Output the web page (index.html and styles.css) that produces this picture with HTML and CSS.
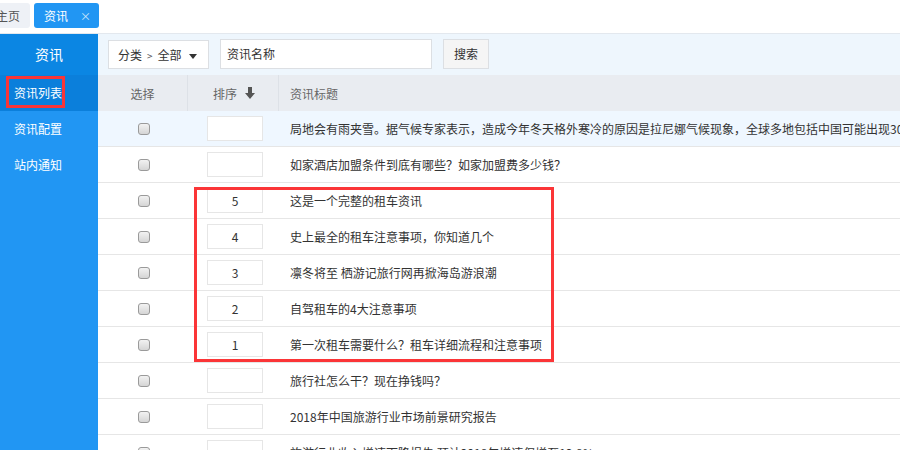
FILE: index.html
```html
<!DOCTYPE html>
<html lang="zh-CN">
<head>
    <meta charset="UTF-8">
    <title>资讯列表</title>
    <link rel="stylesheet" href="styles.css">
</head>
<body>
    <div class="tabs">
        <div class="tab">主页</div>
        <div class="tab active">资讯<span class="close">×</span></div>
    </div>
    <div class="layout">
        <div class="sidebar">
            <div class="side-title">资讯</div>
            <div class="side-item current">资讯列表<span class="mark mark-side"></span></div>
            <div class="side-item">资讯配置</div>
            <div class="side-item">站内通知</div>
        </div>
        <div class="main">
            <div class="toolbar">
                <div class="select">分类<span class="gt">&gt;</span>全部<span class="caret"></span></div>
                <div class="search-input">资讯名称</div>
                <div class="btn">搜索</div>
            </div>
            <div class="table">
                <div class="row head">
                    <div class="c-check">选择</div>
                    <div class="c-sort">排序
                        <svg class="arrow" width="10" height="12" viewBox="0 0 10 12"><path d="M3 0h4v6h3l-5 6-5-6h3z" fill="#555"/></svg>
                    </div>
                    <div class="c-title">资讯标题</div>
                </div>
                <div class="row hover">
                    <div class="c-check"><span class="box"></span></div>
                    <div class="c-sort"><span class="num"></span></div>
                    <div class="c-title">局地会有雨夹雪。据气候专家表示，造成今年冬天格外寒冷的原因是拉尼娜气候现象，全球多地包括中国可能出现30年来最冷冬天</div>
                </div>
                <div class="row">
                    <div class="c-check"><span class="box"></span></div>
                    <div class="c-sort"><span class="num"></span></div>
                    <div class="c-title">如家酒店加盟条件到底有哪些？如家加盟费多少钱？</div>
                </div>
                <div class="row">
                    <div class="c-check"><span class="box"></span></div>
                    <div class="c-sort"><span class="num">5</span></div>
                    <div class="c-title">这是一个完整的租车资讯</div>
                </div>
                <div class="row">
                    <div class="c-check"><span class="box"></span></div>
                    <div class="c-sort"><span class="num">4</span></div>
                    <div class="c-title">史上最全的租车注意事项，你知道几个</div>
                </div>
                <div class="row">
                    <div class="c-check"><span class="box"></span></div>
                    <div class="c-sort"><span class="num">3</span></div>
                    <div class="c-title">凛冬将至 栖游记旅行网再掀海岛游浪潮</div>
                </div>
                <div class="row">
                    <div class="c-check"><span class="box"></span></div>
                    <div class="c-sort"><span class="num">2</span></div>
                    <div class="c-title">自驾租车的4大注意事项</div>
                </div>
                <div class="row">
                    <div class="c-check"><span class="box"></span></div>
                    <div class="c-sort"><span class="num">1</span></div>
                    <div class="c-title">第一次租车需要什么？租车详细流程和注意事项</div>
                </div>
                <div class="row">
                    <div class="c-check"><span class="box"></span></div>
                    <div class="c-sort"><span class="num"></span></div>
                    <div class="c-title">旅行社怎么干？现在挣钱吗？</div>
                </div>
                <div class="row">
                    <div class="c-check"><span class="box"></span></div>
                    <div class="c-sort"><span class="num"></span></div>
                    <div class="c-title">2018年中国旅游行业市场前景研究报告</div>
                </div>
                <div class="row">
                    <div class="c-check"><span class="box"></span></div>
                    <div class="c-sort"><span class="num"></span></div>
                    <div class="c-title">旅游行业收入增速下降报告 预计2018年增速仅增至12.8%</div>
                </div>
                <span class="mark mark-rows"></span>
            </div>
        </div>
    </div>
</body>
</html>
```

FILE: styles.css
```css
body {
    margin: 0;
    width: 900px;
    height: 450px;
    overflow: hidden;
    font-family: "Noto Sans CJK SC", "Noto Sans", sans-serif;
    font-size: 12px;
    color: #333;
    background: #fff;
}
.tabs {
    height: 34px;
    border-bottom: 1px solid #e3e8ee;
    display: flex;
    align-items: flex-start;
    padding-top: 3px;
    box-sizing: border-box;
}
.tab {
    height: 25px;
    line-height: 25px;
    padding: 0 10px;
    margin-right: 4px;
    border-radius: 3px;
    background: #eef1f6;
    color: #555;
    font-size: 12px;
}
.tab:first-child {
    margin-left: -14px;
}
.tab.active {
    background: #2196f3;
    color: #fff;
    padding-right: 8px;
}
.tab .close {
    margin-left: 12px;
    font-size: 11px;
    color: #cfe6fb;
}
.layout {
    display: flex;
    height: 416px;
}
.sidebar {
    width: 98px;
    flex: none;
    background: #2196f3;
    color: #fff;
}
.side-title {
    height: 41px;
    line-height: 41px;
    text-align: center;
    font-size: 14px;
    background: #0b86e3;
}
.side-item {
    position: relative;
    height: 36px;
    line-height: 36px;
    padding-left: 14px;
    font-size: 12px;
}
.side-item.current {
    background: #0b7fdb;
}
.mark {
    position: absolute;
    border: 3px solid #fb3537;
    box-sizing: border-box;
}
.mark-side {
    left: 6px;
    top: 1px;
    width: 59px;
    height: 32px;
}
.main {
    flex: 1;
    overflow: hidden;
}
.toolbar {
    height: 41px;
    background: #eef6fd;
    display: flex;
    align-items: center;
    padding-left: 10px;
    padding-bottom: 1px;
    box-sizing: border-box;
}
.select {
    width: 101px;
    height: 29px;
    line-height: 27px;
    box-sizing: border-box;
    border: 1px solid #dcdfe3;
    background: #fff;
    padding-left: 9px;
    font-size: 12px;
    white-space: nowrap;
}
.gt {
    font-size: 10px;
    color: #555;
    margin: 0 5px;
}
.caret {
    display: inline-block;
    margin-left: 7px;
    vertical-align: middle;
    border-left: 4px solid transparent;
    border-right: 4px solid transparent;
    border-top: 5px solid #333;
}
.search-input {
    width: 212px;
    height: 30px;
    line-height: 28px;
    box-sizing: border-box;
    border: 1px solid #dcdfe3;
    background: #fff;
    margin-left: 11px;
    padding-left: 6px;
}
.btn {
    width: 46px;
    height: 30px;
    line-height: 28px;
    box-sizing: border-box;
    border: 1px solid #dcdfe3;
    background: #f5f5f5;
    text-align: center;
    margin-left: 11px;
}
.table {
    position: relative;
    width: 1000px;
}
.row {
    display: flex;
    height: 36px;
    border-bottom: 1px solid #e6e6e6;
    box-sizing: border-box;
    align-items: center;
}
.row.head {
    background: #e9ecf1;
    color: #666;
    border-bottom: none;
}
.row.hover {
    background: #eff7ff;
}
.c-check {
    width: 90px;
    height: 100%;
    display: flex;
    align-items: center;
    justify-content: center;
}
.c-sort {
    width: 91px;
    height: 100%;
    display: flex;
    align-items: center;
    justify-content: center;
}
.head .c-check,
.head .c-sort {
    border-right: 1px solid #dde1e7;
    box-sizing: border-box;
}
.head .c-sort {
    padding-left: 2px;
}
.arrow {
    margin-left: 8px;
}
.c-title {
    flex: 1;
    padding-left: 11px;
    white-space: nowrap;
    overflow: hidden;
}
.box {
    width: 12px;
    height: 12px;
    box-sizing: border-box;
    border: 1px solid #9a9a9a;
    border-radius: 3px;
    background: linear-gradient(#f2f2f2, #d5d5d5);
    margin-left: 1px;
}
.num {
    width: 56px;
    height: 25px;
    line-height: 23px;
    box-sizing: border-box;
    border: 1px solid #e6e6e6;
    background: #fff;
    text-align: center;
    color: #333;
    font-size: 12px;
    margin-left: 3px;
}
.mark-rows {
    left: 96px;
    top: 112px;
    width: 360px;
    height: 175px;
}
```
